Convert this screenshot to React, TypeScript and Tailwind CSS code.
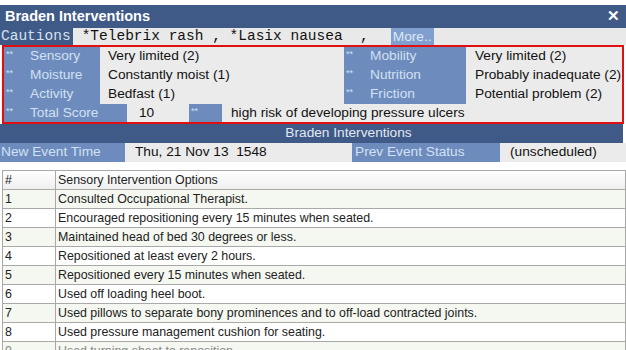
const scores = [
  { left: 'Sensory', leftVal: 'Very limited (2)', right: 'Mobility', rightVal: 'Very limited (2)' },
  { left: 'Moisture', leftVal: 'Constantly moist (1)', right: 'Nutrition', rightVal: 'Probably inadequate (2)' },
  { left: 'Activity', leftVal: 'Bedfast (1)', right: 'Friction', rightVal: 'Potential problem (2)' },
]

const options = [
  'Consulted Occupational Therapist.',
  'Encouraged repositioning every 15 minutes when seated.',
  'Maintained head of bed 30 degrees or less.',
  'Repositioned at least every 2 hours.',
  'Repositioned every 15 minutes when seated.',
  'Used off loading heel boot.',
  'Used pillows to separate bony prominences and to off-load contracted joints.',
  'Used pressure management cushion for seating.',
  'Used turning sheet to reposition.',
]

function Label({ text, className }: { text: string; className: string }) {
  return (
    <div className={`flex h-full items-center bg-[#6d8cbd] text-[#d3e0f3] ${className}`}>
      <span className="w-[26px] self-start pl-[2px] pt-[3px] text-[9px] leading-none">**</span>
      <span>{text}</span>
    </div>
  )
}

export default function App() {
  return (
    <div className="h-[350px] w-[626px] overflow-hidden bg-white pt-[5px] font-['Liberation_Sans',Arial,sans-serif] text-[13.7px] text-[#111]">
      <div className="flex h-[23px] items-center justify-between bg-[#3f5a86] pl-[5px] pr-[6px] text-[14.5px] font-bold text-white">
        <span>Braden Interventions</span>
        <span className="text-[15px]">✕</span>
      </div>

      <div className="flex h-[17px] items-center bg-[#e9e9e9] font-['Liberation_Mono',monospace] text-[14.5px] leading-none">
        <span className="flex h-full items-center bg-[#3f5a86] pl-[1px] pr-[2px] text-[#d7e1f0]">Cautions</span>
        <span className="ml-[9px] whitespace-pre">*Telebrix rash , *Lasix nausea  ,</span>
        <span className="ml-[22px] flex h-full items-center bg-[#7f9fcf] px-[2px] font-['Liberation_Sans',Arial,sans-serif] text-[13.7px] text-[#dfe8f6]">More..</span>
      </div>

      <div className="mx-[2px] border-2 border-[#e01010] bg-[#ebebeb]">
        {scores.map((s) => (
          <div key={s.left} className="flex h-[19px] items-center">
            <Label text={s.left} className="w-[96px]" />
            <span className="ml-[8px] w-[236px]">{s.leftVal}</span>
            <Label text={s.right} className="w-[122px]" />
            <span className="ml-[9px]">{s.rightVal}</span>
          </div>
        ))}
        <div className="flex h-[18px] items-center">
          <Label text="Total Score" className="w-[123px]" />
          <span className="w-[62px] pl-[12px]">10</span>
          <div className="flex h-full w-[33px] items-start bg-[#6d8cbd] pl-[2px] pt-[3px] text-[9px] leading-none text-[#d3e0f3]">**</div>
          <span className="ml-[9px]">high risk of developing pressure ulcers</span>
        </div>
      </div>

      <div className="mr-[3px] flex h-[19px] items-center justify-center bg-[#3f5a86] pl-[74px] text-[#e2e8f2]">
        Braden Interventions
      </div>

      <div className="flex h-[19px] items-center bg-[#ebebeb]">
        <div className="flex h-full w-[125px] items-center bg-[#6d8cbd] pl-[1px] text-[#d3e0f3]">New Event Time</div>
        <span className="ml-[10px] w-[217px]">Thu, 21 Nov 13&nbsp; 1548</span>
        <div className="flex h-full w-[148px] items-center bg-[#6d8cbd] pl-[3px] text-[#d3e0f3]">Prev Event Status</div>
        <span className="ml-[10px]">(unscheduled)</span>
      </div>

      <table className="mt-[8px] ml-[2px] w-[624px] border-collapse text-[12.4px] leading-[15px] text-[#222]">
        <tbody>
          <tr className="h-[19px] bg-gradient-to-b from-white to-[#eeeeee]">
            <td className="w-[53px] border border-[#a9a9a9] pl-[2px]">#</td>
            <td className="border border-[#a9a9a9] pl-[2px]">Sensory Intervention Options</td>
          </tr>
          {options.map((o, i) => (
            <tr key={o} className={`h-[19px] ${i % 2 === 0 ? 'bg-[#f5f8f1]' : 'bg-white'} ${i === 8 ? 'text-[#888]' : ''}`}>
              <td className="border border-[#a9a9a9] pl-[2px]">{i + 1}</td>
              <td className="border border-[#a9a9a9] pl-[2px]">{o}</td>
            </tr>
          ))}
        </tbody>
      </table>
    </div>
  )
}
